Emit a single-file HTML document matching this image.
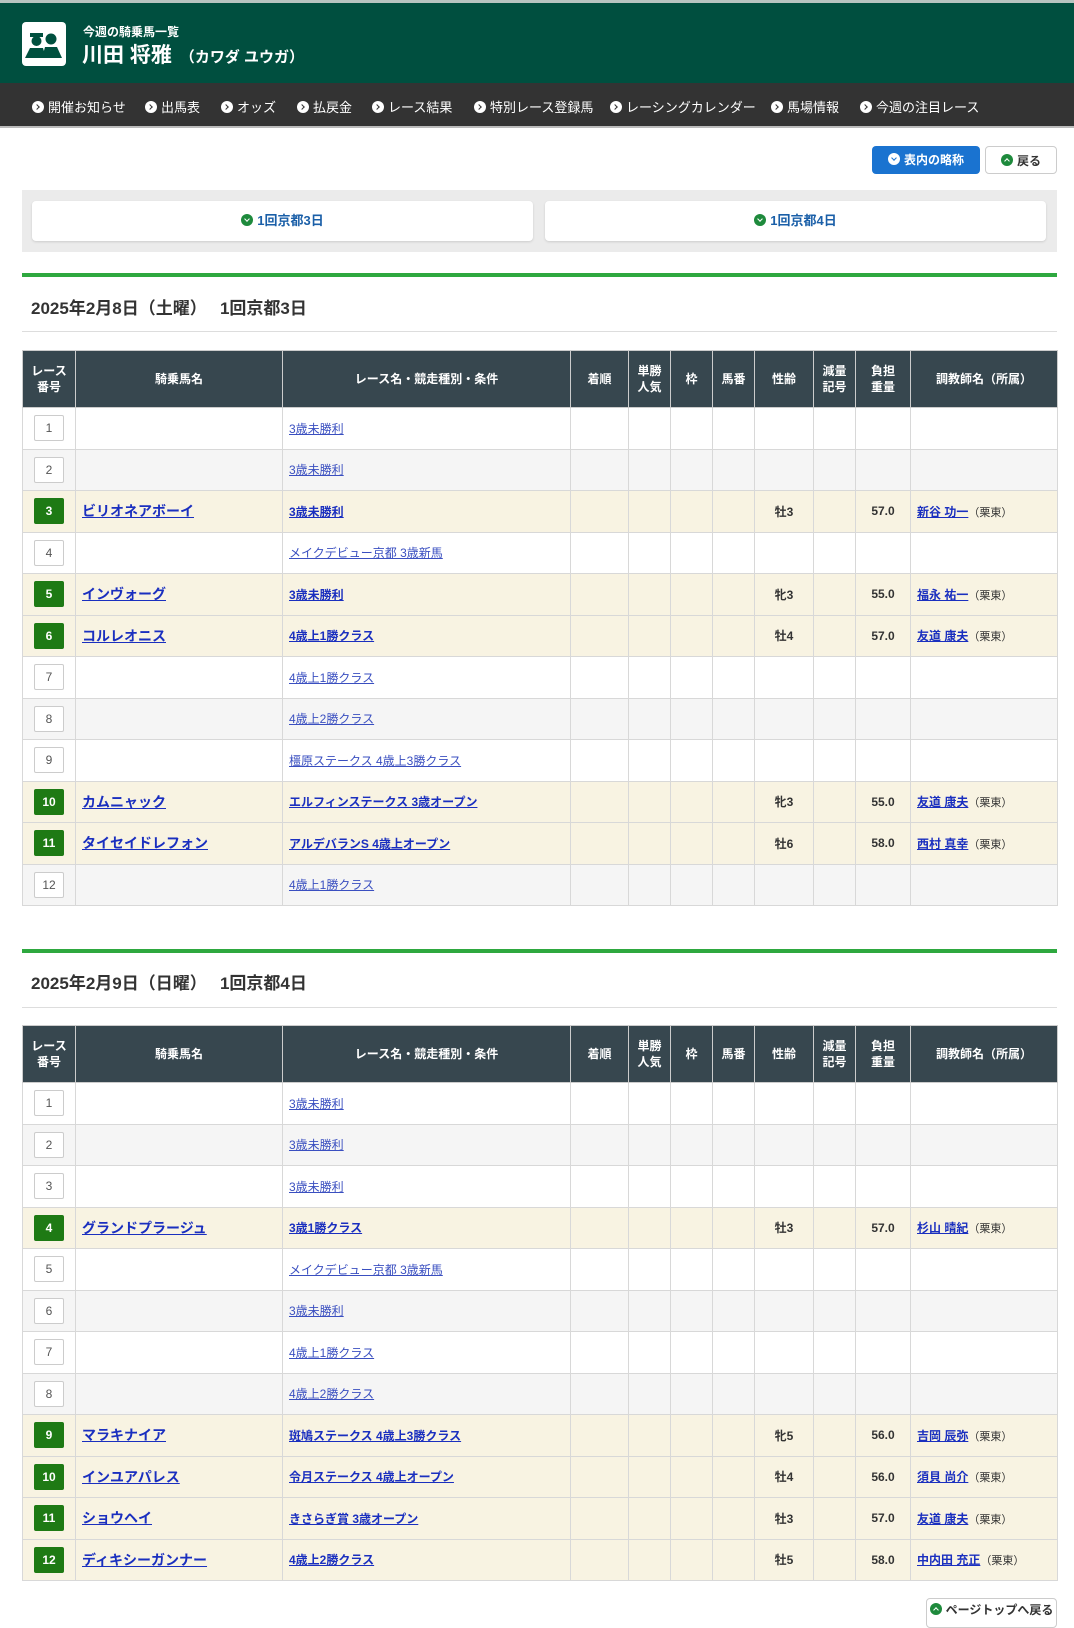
<!DOCTYPE html>
<html><head><meta charset="utf-8"><style>
*{box-sizing:border-box;margin:0;padding:0}
body{width:1074px;height:1610px;overflow:hidden;background:#fff;font-family:"Liberation Sans","Noto Sans CJK JP",sans-serif;color:#333;position:relative}
.hdr{position:absolute;top:0;left:0;width:1074px;height:83px;background:#004f3f;border-top:3px solid #b8c4c0}
.logo{position:absolute;left:22px;top:19px;width:44px;height:44px;background:#fff;border-radius:4px}
.sub{position:absolute;left:83px;top:20px;color:#fff;font-size:12px;font-weight:bold}
.name{position:absolute;left:82px;top:36px;color:#fff;font-size:21px;font-weight:bold}
.name span{font-size:15px;margin-left:8px}
.nav{position:absolute;top:83px;left:0;width:1074px;height:45px;background:#333;border-bottom:2px solid #bbb}
.nav div{position:absolute;top:14px;color:#fff;font-size:13px;white-space:nowrap}
.ci{display:inline-block;width:12px;height:12px;border-radius:50%;background:#fff;vertical-align:-1px;margin-right:4px;position:relative}
.ci:after{content:"";position:absolute;left:2.5px;top:4px;width:3px;height:3px;border-right:1.5px solid #333;border-top:1.5px solid #333;transform:rotate(45deg)}
.btn{position:absolute;top:146px;height:28px;border-radius:4px;font-size:12px;font-weight:bold;text-align:center;line-height:28px}
.tabs{position:absolute;left:22px;top:190px;width:1035px;height:62px;background:#ebebeb}
.tab{position:absolute;top:11px;height:40px;width:501px;background:#fff;border-radius:4px;text-align:center;line-height:40px;color:#1a5fa8;font-size:13px;font-weight:bold;box-shadow:0 1px 2px #ccc}
.gd{display:inline-block;width:12px;height:12px;border-radius:50%;background:#1e8a3c;vertical-align:-1px;margin-right:4px;position:relative}
.gd:after{content:"";position:absolute;left:4px;top:2.5px;width:3px;height:3px;border-right:1.5px solid #fff;border-bottom:1.5px solid #fff;transform:rotate(45deg)}
.gd.up:after{top:4.5px;transform:rotate(-135deg)}
.gd.wb{background:#fff}.gd.wb:after{border-color:#1a73d0}
.gl{position:absolute;left:22px;width:1035px;height:4px;background:#2ea83f}
.dh{position:absolute;left:31px;font-size:17px;font-weight:bold;color:#333}
.dl{position:absolute;left:22px;width:1035px;height:1px;background:#ddd}
table{position:absolute;left:22px;width:1035px;table-layout:fixed;border-collapse:collapse;font-size:12px}
th{background:#37474f;color:#fff;height:57px;border:1px solid #ccc;font-size:12px;line-height:16px;font-weight:bold}
td{height:41.5px;border:1px solid #d8d8d8;text-align:center;font-weight:bold}
tr.w td{background:#fff}tr.g td{background:#f5f5f5}tr.h td{background:#f8f3e2}
td.l{text-align:left;padding-left:6px}
.n{display:inline-block;width:30px;height:26px;line-height:24px;border:1px solid #ccc;border-radius:2px;background:#fff;font-weight:normal;color:#555;font-size:12px}
.n.a{background:#1e7a14;border-color:#1e7a14;color:#fff;font-weight:bold}
a{color:#1a2fbf;text-decoration:underline}
tr.w a,tr.g a{font-weight:normal;color:#3a4fc0}
td.l a.hn{font-size:14px}
.tr{font-weight:normal;font-size:11px;color:#333}
</style></head><body>
<div class="hdr">
<div class="logo"><svg width="44" height="44"><rect x="8" y="11" width="13" height="4" fill="#00503f"/><circle cx="14.5" cy="19" r="5" fill="#00503f"/><circle cx="29" cy="17" r="5.5" fill="#00503f"/><path d="M3 36 L8 26 L21 26 L24 36 Z M20 36 L23 25 L35 25 L40 36 Z" fill="#00503f"/></svg></div>
<div class="sub">今週の騎乗馬一覧</div>
<div class="name">川田 将雅<span>（カワダ ユウガ）</span></div>
</div>
<div class="nav">
<div style="left:32px"><i class="ci"></i>開催お知らせ</div>
<div style="left:145px"><i class="ci"></i>出馬表</div>
<div style="left:221px"><i class="ci"></i>オッズ</div>
<div style="left:297px"><i class="ci"></i>払戻金</div>
<div style="left:372px"><i class="ci"></i>レース結果</div>
<div style="left:474px"><i class="ci"></i>特別レース登録馬</div>
<div style="left:610px"><i class="ci"></i>レーシングカレンダー</div>
<div style="left:771px"><i class="ci"></i>馬場情報</div>
<div style="left:860px"><i class="ci"></i>今週の注目レース</div>
</div>
<div class="btn" style="left:872px;width:108px;background:#1a73d0;color:#fff"><i class="gd wb"></i>表内の略称</div>
<div class="btn" style="left:985px;width:72px;background:#fff;border:1px solid #ccc;color:#333"><i class="gd up"></i>戻る</div>
<div class="tabs"><div class="tab" style="left:10px"><i class="gd"></i>1回京都3日</div><div class="tab" style="left:523px"><i class="gd"></i>1回京都4日</div></div>

<div class="gl" style="top:273px"></div>
<div class="dh" style="top:294px">2025年2月8日（土曜）　 1回京都3日</div>
<div class="dl" style="top:331px"></div>
<table style="top:350px">
<colgroup><col width="53"><col width="207"><col width="288"><col width="58"><col width="42"><col width="42"><col width="42"><col width="59"><col width="42"><col width="55"><col width="147"></colgroup>
<tr><th>レース<br>番号</th><th>騎乗馬名</th><th>レース名・競走種別・条件</th><th>着順</th><th>単勝<br>人気</th><th>枠</th><th>馬番</th><th>性齢</th><th>減量<br>記号</th><th>負担<br>重量</th><th>調教師名（所属）</th></tr>
<tr class="w"><td><span class="n">1</span></td><td></td><td class="l"><a>3歳未勝利</a></td><td></td><td></td><td></td><td></td><td></td><td></td><td></td><td></td></tr>
<tr class="g"><td><span class="n">2</span></td><td></td><td class="l"><a>3歳未勝利</a></td><td></td><td></td><td></td><td></td><td></td><td></td><td></td><td></td></tr>
<tr class="h"><td><span class="n a">3</span></td><td class="l"><a class="hn">ビリオネアボーイ</a></td><td class="l"><a>3歳未勝利</a></td><td></td><td></td><td></td><td></td><td>牡3</td><td></td><td>57.0</td><td class="l"><a>新谷 功一</a><span class="tr">（栗東）</span></td></tr>
<tr class="w"><td><span class="n">4</span></td><td></td><td class="l"><a>メイクデビュー京都 3歳新馬</a></td><td></td><td></td><td></td><td></td><td></td><td></td><td></td><td></td></tr>
<tr class="h"><td><span class="n a">5</span></td><td class="l"><a class="hn">インヴォーグ</a></td><td class="l"><a>3歳未勝利</a></td><td></td><td></td><td></td><td></td><td>牝3</td><td></td><td>55.0</td><td class="l"><a>福永 祐一</a><span class="tr">（栗東）</span></td></tr>
<tr class="h"><td><span class="n a">6</span></td><td class="l"><a class="hn">コルレオニス</a></td><td class="l"><a>4歳上1勝クラス</a></td><td></td><td></td><td></td><td></td><td>牡4</td><td></td><td>57.0</td><td class="l"><a>友道 康夫</a><span class="tr">（栗東）</span></td></tr>
<tr class="w"><td><span class="n">7</span></td><td></td><td class="l"><a>4歳上1勝クラス</a></td><td></td><td></td><td></td><td></td><td></td><td></td><td></td><td></td></tr>
<tr class="g"><td><span class="n">8</span></td><td></td><td class="l"><a>4歳上2勝クラス</a></td><td></td><td></td><td></td><td></td><td></td><td></td><td></td><td></td></tr>
<tr class="w"><td><span class="n">9</span></td><td></td><td class="l"><a>橿原ステークス 4歳上3勝クラス</a></td><td></td><td></td><td></td><td></td><td></td><td></td><td></td><td></td></tr>
<tr class="h"><td><span class="n a">10</span></td><td class="l"><a class="hn">カムニャック</a></td><td class="l"><a>エルフィンステークス 3歳オープン</a></td><td></td><td></td><td></td><td></td><td>牝3</td><td></td><td>55.0</td><td class="l"><a>友道 康夫</a><span class="tr">（栗東）</span></td></tr>
<tr class="h"><td><span class="n a">11</span></td><td class="l"><a class="hn">タイセイドレフォン</a></td><td class="l"><a>アルデバランS 4歳上オープン</a></td><td></td><td></td><td></td><td></td><td>牡6</td><td></td><td>58.0</td><td class="l"><a>西村 真幸</a><span class="tr">（栗東）</span></td></tr>
<tr class="g"><td><span class="n">12</span></td><td></td><td class="l"><a>4歳上1勝クラス</a></td><td></td><td></td><td></td><td></td><td></td><td></td><td></td><td></td></tr>
</table>

<div class="gl" style="top:949px"></div>
<div class="dh" style="top:969px">2025年2月9日（日曜）　 1回京都4日</div>
<div class="dl" style="top:1007px"></div>
<table style="top:1025px">
<colgroup><col width="53"><col width="207"><col width="288"><col width="58"><col width="42"><col width="42"><col width="42"><col width="59"><col width="42"><col width="55"><col width="147"></colgroup>
<tr><th>レース<br>番号</th><th>騎乗馬名</th><th>レース名・競走種別・条件</th><th>着順</th><th>単勝<br>人気</th><th>枠</th><th>馬番</th><th>性齢</th><th>減量<br>記号</th><th>負担<br>重量</th><th>調教師名（所属）</th></tr>
<tr class="w"><td><span class="n">1</span></td><td></td><td class="l"><a>3歳未勝利</a></td><td></td><td></td><td></td><td></td><td></td><td></td><td></td><td></td></tr>
<tr class="g"><td><span class="n">2</span></td><td></td><td class="l"><a>3歳未勝利</a></td><td></td><td></td><td></td><td></td><td></td><td></td><td></td><td></td></tr>
<tr class="w"><td><span class="n">3</span></td><td></td><td class="l"><a>3歳未勝利</a></td><td></td><td></td><td></td><td></td><td></td><td></td><td></td><td></td></tr>
<tr class="h"><td><span class="n a">4</span></td><td class="l"><a class="hn">グランドプラージュ</a></td><td class="l"><a>3歳1勝クラス</a></td><td></td><td></td><td></td><td></td><td>牡3</td><td></td><td>57.0</td><td class="l"><a>杉山 晴紀</a><span class="tr">（栗東）</span></td></tr>
<tr class="w"><td><span class="n">5</span></td><td></td><td class="l"><a>メイクデビュー京都 3歳新馬</a></td><td></td><td></td><td></td><td></td><td></td><td></td><td></td><td></td></tr>
<tr class="g"><td><span class="n">6</span></td><td></td><td class="l"><a>3歳未勝利</a></td><td></td><td></td><td></td><td></td><td></td><td></td><td></td><td></td></tr>
<tr class="w"><td><span class="n">7</span></td><td></td><td class="l"><a>4歳上1勝クラス</a></td><td></td><td></td><td></td><td></td><td></td><td></td><td></td><td></td></tr>
<tr class="g"><td><span class="n">8</span></td><td></td><td class="l"><a>4歳上2勝クラス</a></td><td></td><td></td><td></td><td></td><td></td><td></td><td></td><td></td></tr>
<tr class="h"><td><span class="n a">9</span></td><td class="l"><a class="hn">マラキナイア</a></td><td class="l"><a>斑鳩ステークス 4歳上3勝クラス</a></td><td></td><td></td><td></td><td></td><td>牝5</td><td></td><td>56.0</td><td class="l"><a>吉岡 辰弥</a><span class="tr">（栗東）</span></td></tr>
<tr class="h"><td><span class="n a">10</span></td><td class="l"><a class="hn">インユアパレス</a></td><td class="l"><a>令月ステークス 4歳上オープン</a></td><td></td><td></td><td></td><td></td><td>牡4</td><td></td><td>56.0</td><td class="l"><a>須貝 尚介</a><span class="tr">（栗東）</span></td></tr>
<tr class="h"><td><span class="n a">11</span></td><td class="l"><a class="hn">ショウヘイ</a></td><td class="l"><a>きさらぎ賞 3歳オープン</a></td><td></td><td></td><td></td><td></td><td>牡3</td><td></td><td>57.0</td><td class="l"><a>友道 康夫</a><span class="tr">（栗東）</span></td></tr>
<tr class="h"><td><span class="n a">12</span></td><td class="l"><a class="hn">ディキシーガンナー</a></td><td class="l"><a>4歳上2勝クラス</a></td><td></td><td></td><td></td><td></td><td>牡5</td><td></td><td>58.0</td><td class="l"><a>中内田 充正</a><span class="tr">（栗東）</span></td></tr>
</table>
<div class="btn" style="left:926px;top:1598px;width:131px;height:30px;background:#fff;border:1px solid #ccc;color:#333;line-height:22px"><i class="gd up"></i>ページトップへ戻る</div>
</body></html>
